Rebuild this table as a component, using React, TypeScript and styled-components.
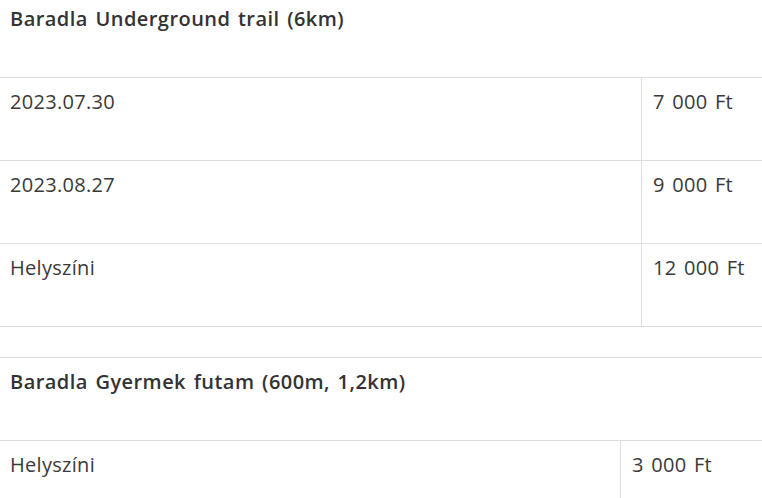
import React from "react";
import styled, { createGlobalStyle } from "styled-components";

const GlobalStyle = createGlobalStyle`
  html, body {
    margin: 0;
    padding: 0;
    background: #ffffff;
  }
  body {
    font-family: "Open Sans", "Noto Sans", "Liberation Sans", sans-serif;
    color: #3a3a3a;
    overflow: hidden;
  }
`;

const Page = styled.main`
  display: flex;
  flex-direction: column;
  gap: 30px;
  margin-top: -6px;
  width: 762px;
`;

const PriceTable = styled.section`
  display: flex;
  flex-direction: column;
  border-top: 1px solid #dedede;
  border-bottom: 1px solid #dedede;
`;

const Header = styled.h2`
  margin: 0;
  height: 82px;
  box-sizing: border-box;
  padding: 9px 10px 0;
  font-size: 20px;
  line-height: 30px;
  font-weight: 600;
  letter-spacing: 0.45px;
  word-spacing: 2px;
  color: #333333;
`;

const Row = styled.div<{ $priceWidth: number }>`
  display: grid;
  grid-template-columns: 1fr ${(p) => p.$priceWidth}px;
  height: 83px;
  box-sizing: border-box;
  border-top: 1px solid #dedede;
`;

const Cell = styled.div<{ $price?: boolean }>`
  padding: 9px 10px 0 ${(p) => (p.$price ? "11px" : "10px")};
  font-size: 20px;
  line-height: 30px;
  font-weight: 400;
  letter-spacing: 0.3px;
  word-spacing: 2px;
  color: #3a3a3a;
  border-left: ${(p) => (p.$price ? "1px solid #dedede" : "none")};
  white-space: nowrap;
`;

type Entry = { label: string; price: string };

const tables: { title: string; priceWidth: number; rows: Entry[] }[] = [
  {
    title: "Baradla Underground trail (6km)",
    priceWidth: 121,
    rows: [
      { label: "2023.07.30", price: "7 000 Ft" },
      { label: "2023.08.27", price: "9 000 Ft" },
      { label: "Helyszíni", price: "12 000 Ft" },
    ],
  },
  {
    title: "Baradla Gyermek futam (600m, 1,2km)",
    priceWidth: 142,
    rows: [{ label: "Helyszíni", price: "3 000 Ft" }],
  },
];

export default function App() {
  return (
    <>
      <GlobalStyle />
      <Page>
        {tables.map((t) => (
          <PriceTable key={t.title}>
            <Header>{t.title}</Header>
            {t.rows.map((r) => (
              <Row key={r.label} $priceWidth={t.priceWidth}>
                <Cell>{r.label}</Cell>
                <Cell $price>{r.price}</Cell>
              </Row>
            ))}
          </PriceTable>
        ))}
      </Page>
    </>
  );
}
